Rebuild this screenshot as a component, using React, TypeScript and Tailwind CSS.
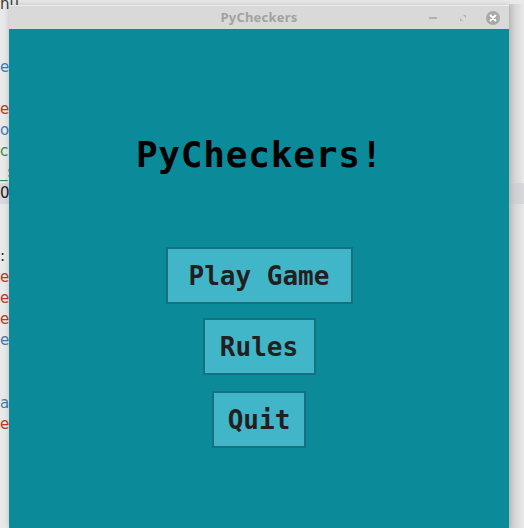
import React from 'react';

// editor lines peeking out from behind the window (left edge only)
const editorLines: { text: string; color: string }[] = [
  { text: 'nu', color: 'text-[#3a3a3a]' },
  { text: '', color: '' },
  { text: '', color: '' },
  { text: 'e', color: 'text-[#3f7cb8]' },
  { text: '', color: '' },
  { text: 'e', color: 'text-[#c0392b]' },
  { text: 'o', color: 'text-[#3f7cb8]' },
  { text: 'c', color: 'text-[#3d8a4a]' },
  { text: '_s', color: 'text-[#3d8a4a]' },
  { text: '0', color: 'text-[#222]' },
  { text: '', color: '' },
  { text: '', color: '' },
  { text: ':', color: 'text-[#222]' },
  { text: 'e', color: 'text-[#c0392b]' },
  { text: 'e', color: 'text-[#c0392b]' },
  { text: 'e', color: 'text-[#c0392b]' },
  { text: 'e', color: 'text-[#3f7cb8]' },
  { text: '', color: '' },
  { text: '', color: '' },
  { text: 'a', color: 'text-[#3f7cb8]' },
  { text: 'e', color: 'text-[#c0392b]' },
  { text: '', color: '' },
  { text: '', color: '' },
  { text: '', color: '' },
  { text: '', color: '' },
];

function MenuButton({ label, width, className }: { label: string; width: string; className?: string }) {
  return (
    <button
      className={`${width} ${className ?? ''} h-[57px] flex items-center justify-center bg-[#41b6c8] border-2 border-[#15717f] text-[#231f20] text-[26px] font-bold leading-none`}
      style={{ fontFamily: '"DejaVu Sans Mono", "Liberation Mono", monospace' }}
    >
      {label}
    </button>
  );
}

export default function App() {
  return (
    <div
      className="relative w-[524px] h-[528px] overflow-hidden bg-[#e9e9e9]"
      style={{ fontFamily: '"Noto Sans", "DejaVu Sans", sans-serif' }}
    >
      {/* Editor behind the window */}
      <div className="flex flex-col -mt-[6px] text-[15px]" style={{ fontFamily: '"DejaVu Sans", sans-serif' }}>
        {editorLines.map((line, i) => (
          <div
            key={i}
            className={`h-[21px] leading-[21px] pl-0 whitespace-nowrap ${line.color} ${i === 9 ? 'bg-[#d6d9de]' : ''}`}
          >
            {line.text}
          </div>
        ))}
      </div>

      {/* Window shadow on the right */}
      <div className="absolute top-[4px] left-[509px] w-[15px] h-[524px] bg-gradient-to-r from-[#c9c9c9] to-transparent" />

      {/* PyCheckers window */}
      <div className="absolute left-[9px] top-[5px] w-[500px] h-[524px] flex flex-col shadow-[0_0_6px_rgba(0,0,0,0.18)]">
        {/* Title bar */}
        <div className="relative h-[24px] bg-[#d9d9d9] border-t border-[#ececec] flex items-center justify-center">
          <span className="text-[13px] font-bold text-[#a2a2a2] tracking-[0.2px]">PyCheckers</span>
          <div className="absolute right-[9px] top-0 h-full flex items-center">
            <div className="w-[8px] h-[2px] bg-[#b0b0b0] mr-[22px]" />
            <svg width="8" height="8" viewBox="0 0 8 8" className="mr-[19px]">
              <path d="M1 4 L1 7 L4 7 Z M4 1 L7 1 L7 4 Z" fill="#b3b3b3" />
            </svg>
            <div className="w-[14px] h-[14px] rounded-full bg-[#a9a9a9] flex items-center justify-center">
              <svg width="8" height="8" viewBox="0 0 8 8">
                <path d="M1.5 1.5 L6.5 6.5 M6.5 1.5 L1.5 6.5" stroke="#ffffff" strokeWidth="1.8" strokeLinecap="round" />
              </svg>
            </div>
          </div>
        </div>

        {/* Game surface */}
        <div className="flex-1 bg-[#0b8a9a] flex flex-col items-center pt-[108px]">
          <h1
            className="h-[36px] text-[36px] leading-none font-bold text-black tracking-[0.8px] pl-[1px]"
            style={{ fontFamily: '"DejaVu Sans Mono", "Liberation Mono", monospace' }}
          >
            PyCheckers!
          </h1>
          <MenuButton label="Play Game" width="w-[187px]" className="mt-[74px]" />
          <MenuButton label="Rules" width="w-[113px]" className="mt-[14px]" />
          <MenuButton label="Quit" width="w-[94px]" className="mt-[16px]" />
        </div>
      </div>
    </div>
  );
}
